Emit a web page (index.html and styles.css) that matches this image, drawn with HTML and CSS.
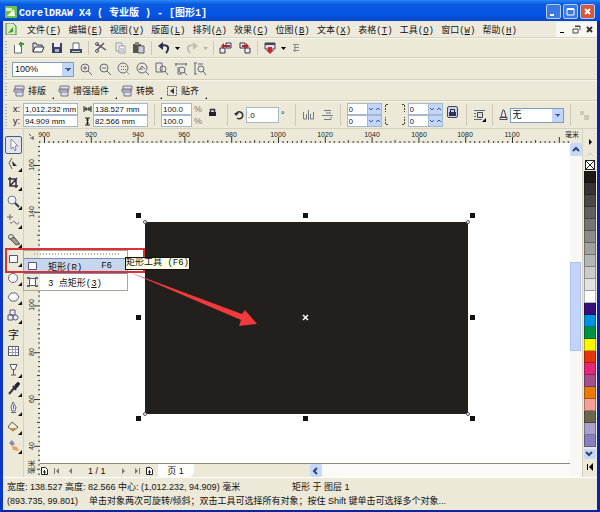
FILE: index.html
```html
<!DOCTYPE html>
<html lang="zh-CN">
<head>
    <meta charset="UTF-8">
    <meta name="viewport" content="width=device-width, initial-scale=1.0">
    <title>CorelDRAW X4</title>
    <link rel="stylesheet" href="styles.css">
</head>
<body>
<div class="window">
    <!-- Title bar -->
    <header class="titlebar">
        <svg class="logo" width="12" height="12" viewBox="0 0 12 12"><rect width="12" height="12" rx="1" fill="#6fc04c"/><path d="M1 2h6v3H1z" fill="#d8f0b8"/><path d="M2 10L9 3l1 7z" fill="#f4fbe8"/></svg>
        <h1>CorelDRAW X4 ( 专业版 ) - [图形1]</h1>
        <button class="win-btn" aria-label="最小化"><svg width="13" height="13"><path d="M3 9h4v2H3z" fill="#fff"/></svg></button>
        <button class="win-btn" aria-label="最大化"><svg width="13" height="13"><path d="M3 4h7v6H3z" fill="none" stroke="#fff"/><path d="M3 3h7v2H3z" fill="#fff"/></svg></button>
        <button class="win-btn close" aria-label="关闭"><svg width="13" height="13"><path d="M4 4l5 5M9 4l-5 5" stroke="#fff" stroke-width="2"/></svg></button>
    </header>

    <!-- Menu bar -->
    <nav class="menubar">
        <svg class="logo" width="12" height="12" viewBox="0 0 12 12"><path d="M1 0h7l3 3v9H1z" fill="#d9edc0" stroke="#56803c"/><path d="M3 10l5-6v5z" fill="#3f9b36"/></svg>
        <div class="menus">
            <button>文件(<u>F</u>)</button>
            <button>编辑(<u>E</u>)</button>
            <button>视图(<u>V</u>)</button>
            <button>版面(<u>L</u>)</button>
            <button>排列(<u>A</u>)</button>
            <button>效果(<u>C</u>)</button>
            <button>位图(<u>B</u>)</button>
            <button>文本(<u>X</u>)</button>
            <button>表格(<u>T</u>)</button>
            <button>工具(<u>O</u>)</button>
            <button>窗口(<u>W</u>)</button>
            <button>帮助(<u>H</u>)</button>
        </div>
        <div class="doc-btns">
            <button aria-label="最小化文档"><svg width="11" height="11"><path d="M2 8h4v1H2z"/></svg></button>
            <button aria-label="还原文档"><svg width="11" height="11"><path d="M4 2h5v4M2 5h5v4H2zM4 2.5h5" fill="none" stroke="#444"/></svg></button>
            <button aria-label="关闭文档"><svg width="11" height="11"><path d="M3 3l5 5M8 3l-5 5" stroke="#333" stroke-width="2"/></svg></button>
        </div>
    </nav>

    <!-- Standard toolbar -->
    <div class="toolbar standard">
        <button aria-label="新建"><svg width="14" height="14"><path d="M2.500 4v8h7V5" fill="#fff" stroke="#667"/><path d="M9 1v5M7 3h5" stroke="#3a9a48" stroke-width="2"/></svg></button>
        <button aria-label="打开"><svg width="14" height="14"><path d="M2 11V2h3l1 2h5v2" fill="#dde" stroke="#334"/><path d="M4 6h9l-2 5H2z" fill="#fff" stroke="#334"/></svg></button>
        <button aria-label="保存"><svg width="14" height="14"><path d="M2 2h10v10H2z" fill="#3b3d6a"/><path d="M4 2h6v4H4z" fill="#eef"/><path d="M5 8h4v3H5z" fill="#aab"/></svg></button>
        <button aria-label="打印"><svg width="14" height="14"><path d="M4 8V2h6v6" fill="#fff" stroke="#667"/><path d="M1 8h12v4H1z" fill="#444860"/><path d="M3 10h8v1H3z" fill="#b8d8b0"/></svg></button>
        <i class="sep"></i>
        <button aria-label="剪切"><svg width="14" height="14" fill="none" stroke="#556"><path d="M3 3l9 6M3 9l7-7" stroke-width="1.500"/><circle cx="3" cy="3" r="1.500"/><circle cx="3" cy="10" r="1.500"/></svg></button>
        <button aria-label="复制"><svg width="14" height="14" stroke="#99a"><path d="M3 2h6v8H3z" fill="#eee"/><path d="M6 5h6v7H6z" fill="#fff"/><path d="M7 8h4M7 10h4"/></svg></button>
        <button aria-label="粘贴"><svg width="14" height="14"><path d="M1 3h8v9H1z" fill="#55564a"/><path d="M3 1h4v3H3z" fill="#888"/><path d="M6 5h6v7H6z" fill="#ccd" stroke="#555"/></svg></button>
        <i class="sep"></i>
        <button aria-label="撤消"><svg width="14" height="14"><path d="M4 5c4-2 8 0 7 3 0 2-1 3-2 4" fill="none" stroke="#2c3050" stroke-width="2"/><path d="M1 5l5-4v8z" fill="#2c3050"/></svg></button>
        <button class="narrow" aria-label="撤消列表"><svg width="5" height="5"><path d="M0 1h5L2.500 4z"/></svg></button>
        <button aria-label="重做"><svg width="14" height="14"><path d="M10 5c-4-2-8 0-7 3 0 2 1 3 2 4" fill="none" stroke="#c2c0b2" stroke-width="2"/><path d="M13 5L8 1v8z" fill="#c2c0b2"/></svg></button>
        <button class="narrow" aria-label="重做列表"><svg width="5" height="5"><path d="M0 1h5L2.500 4z" fill="#b8b5a6"/></svg></button>
        <i class="sep"></i>
        <button aria-label="导入"><svg width="14" height="14"><path d="M1 7h5v5H1zM7 2h5v5H7z" fill="#eef" stroke="#334"/><path d="M11 4H5V2L2 5l3 3V6h6z" fill="#b4202c"/></svg></button>
        <button aria-label="导出"><svg width="14" height="14"><path d="M2 2h5v5H2zM7 7h5v5H7z" fill="#eef" stroke="#334"/><path d="M4 4h4V2l3 3-3 3V6H4z" fill="#b4202c"/></svg></button>
        <i class="sep"></i>
        <button aria-label="应用程序启动器"><svg width="14" height="14"><path d="M2 2h10v6H2z" fill="#dde" stroke="#445"/><path d="M2 2h10v2H2z" fill="#445"/><path d="M5 6h4v3h2l-4 4-4-4h2z" fill="#c02c34"/></svg></button>
        <button class="narrow" aria-label="启动器列表"><svg width="5" height="5"><path d="M0 1h5L2.500 4z"/></svg></button>
        <svg width="9" height="12" fill="none" stroke="#888"><path d="M2 2.500h6M3 5.500h5M2 8.500h6M4 2v8"/></svg>
    </div>

    <!-- Zoom toolbar -->
    <div class="toolbar zoom">
        <select class="combo zoom-level" aria-label="缩放级别"><option>100%</option></select>
        <button aria-label="放大"><svg width="14" height="14" class="lens"><circle cx="6" cy="6" r="4"/><path d="M9 9l4 4M4 6h4M6 4v4"/></svg></button>
        <button aria-label="缩小"><svg width="14" height="14" class="lens"><circle cx="6" cy="6" r="4"/><path d="M9 9l4 4M4 6h4"/></svg></button>
        <button aria-label="缩放选定范围"><svg width="14" height="14" class="lens"><circle cx="6" cy="6" r="5"/><path d="M10 10l3 3M4 4.500h5M4 7.500h5" stroke-dasharray="1 1"/></svg></button>
        <button aria-label="缩放全部对象"><svg width="14" height="14" class="lens"><circle cx="6" cy="6" r="5"/><path d="M10 10l3 3M3 8l3-4 3 3M4 7h3"/></svg></button>
        <button aria-label="缩放页面"><svg width="14" height="14" class="lens"><path d="M1 1h6v9H1z"/><circle cx="8" cy="7" r="3"/><path d="M10 9l3 4"/></svg></button>
        <button aria-label="缩放页宽"><svg width="14" height="14" class="lens"><path d="M1 2h12M2 1v3M12 1v3M4 5v7h4"/><circle cx="8" cy="8" r="3"/><path d="M10 10l3 3"/></svg></button>
        <button aria-label="缩放页高"><svg width="14" height="14" class="lens"><path d="M2 1v11M1 1h3M1 12h3M5 2h5"/><circle cx="8" cy="7" r="3"/><path d="M10 9l3 4"/></svg></button>
    </div>

    <!-- Plug-in toolbar -->
    <div class="toolbar plugins">
        <button><svg width="12" height="12" class="mac"><path d="M2 1h9v4H2zM1 4h9v3H1zM3 7v4h7V6"/></svg>排版</button>
        <button><svg width="12" height="12" class="mac"><path d="M2 1h9v4H2zM1 4h9v3H1zM3 7v4h7V6"/></svg>增强插件</button>
        <button><svg width="12" height="12" class="mac"><path d="M2 1h9v4H2zM1 4h9v3H1zM3 7v4h7V6"/></svg>转换</button>
        <button><svg width="12" height="12"><path d="M1.500 1.500h9v9h-9z" fill="none" stroke="#556" stroke-dasharray="2 1"/><path d="M4 6l4-3v6z" fill="#334"/></svg>贴齐</button>
    </div>

    <!-- Property bar -->
    <div class="toolbar props">
        <div class="pair">
            <label for="posX">x:</label><input id="posX" class="field" value="1,012.232 mm">
            <label for="posY">y:</label><input id="posY" class="field" value="94.909 mm">
        </div>
        <div class="pair size">
            <label for="sizeW" aria-label="宽度"><svg width="9" height="8"><path d="M1 1v6M8 1v6M1 4h7M3 2v4M6 2v4" stroke="#222"/></svg></label><input id="sizeW" class="field" value="138.527 mm">
            <label for="sizeH" aria-label="高度"><svg width="9" height="9"><path d="M2 1h5M2 8h5M4.500 1v7M3 3h3M3 6h3" stroke="#222"/></svg></label><input id="sizeH" class="field" value="82.566 mm">
        </div>
        <i class="sep"></i>
        <div class="pair scale">
            <input id="scaleX" class="field" value="100.0"><label for="scaleX">%</label>
            <input id="scaleY" class="field" value="100.0"><label for="scaleY">%</label>
        </div>
        <button class="lock" aria-label="锁定比率"><svg width="9" height="10"><path d="M2.500 5V2.500h4V5" fill="none" stroke="#334" stroke-width="1.500"/><path d="M1 5h7v4H1z" fill="#223"/></svg></button>
        <i class="sep"></i>
        <div class="rotate">
            <label for="angle" aria-label="旋转角度"><svg width="10" height="10"><path d="M2 4a3.500 3.500 0 1 1 1 4" fill="none" stroke="#333" stroke-width="1.500"/><path d="M0 3h5L2 6z" fill="#333"/></svg></label>
            <input id="angle" class="field" value=".0"><span>°</span>
        </div>
        <i class="sep"></i>
        <button aria-label="水平镜像"><svg width="13" height="12" fill="none" stroke="#778"><path d="M1.500 3v7h3V5M11.500 3v7h-3V5M6.500 1v10"/></svg></button>
        <button aria-label="垂直镜像"><svg width="13" height="12" fill="none" stroke="#778"><path d="M3 1.500h7M5 4h5M1 6.500h11M3 10.500h7V8"/></svg></button>
        <i class="sep"></i>
        <div class="corners">
            <input type="text" class="field spin" aria-label="左上角圆滑度" value="0"><button class="arrows" aria-label="调整左上角"><svg width="13" height="10"><path d="M1 4l2 2 2-2M8 6l2-2 2 2"/></svg></button>
            <input type="text" class="field spin" aria-label="左下角圆滑度" value="0"><button class="arrows" aria-label="调整左下角"><svg width="13" height="10"><path d="M1 4l2 2 2-2M8 6l2-2 2 2"/></svg></button>
        </div>
        <svg width="22" height="24" fill="none" stroke="#443" stroke-dasharray="2 1"><path d="M4 1.500H1.500V9M18 1.500h2.500V9M4 21.500H1.500V14M18 21.500h2.500V14"/></svg>
        <div class="corners">
            <input type="text" class="field spin" aria-label="右上角圆滑度" value="0"><button class="arrows" aria-label="调整右上角"><svg width="13" height="10"><path d="M1 4l2 2 2-2M8 6l2-2 2 2"/></svg></button>
            <input type="text" class="field spin" aria-label="右下角圆滑度" value="0"><button class="arrows" aria-label="调整右下角"><svg width="13" height="10"><path d="M1 4l2 2 2-2M8 6l2-2 2 2"/></svg></button>
        </div>
        <button class="lock pressed" aria-label="全部圆角"><svg width="9" height="10"><path d="M2.500 5V2.500h4V5" fill="none" stroke="#224"/><path d="M1 5h7v4H1z" fill="#335"/></svg></button>
        <i class="sep"></i>
        <button aria-label="段落文本换行"><svg width="13" height="13"><path d="M1 1.500h11M1 4.500h2M1 7.500h2M1 10.500h8" stroke="#667"/><path d="M4.500 3.500h5v5h-5z" fill="#dde" stroke="#445"/><path d="M13 9v4H9z"/></svg></button>
        <i class="sep"></i>
        <div class="outline">
            <label for="outline" aria-label="轮廓宽度"><svg width="9" height="12"><path d="M2 8l1-4 1-3h1l1 3 1 4zM1 8.500h7v2H1z" fill="#eee" stroke="#445"/></svg></label>
            <select id="outline" class="combo"><option>无</option></select>
        </div>
        <i class="sep"></i>
        <svg width="11" height="12"><path d="M1 2h4v4H1zM5 6h5v5H5z" fill="#ccc9bb"/></svg>
    </div>

    <!-- Toolbox, rulers, page and palette -->
    <main class="workspace">
        <aside class="toolbox">
            <button class="active" aria-label="挑选工具"><svg width="13" height="14"><path d="M4 1v10l2-2 2 4 1-1-1-4h3z" fill="#fff" stroke="#889"/></svg></button>
            <button class="more" aria-label="形状工具"><svg width="13" height="14"><path d="M5 1L2 6l3 6" fill="none" stroke="#556"/><path d="M5 4l5 5-4 0z" fill="#223"/></svg></button>
            <button class="more" aria-label="裁剪工具"><svg width="13" height="14" fill="none" stroke="#334"><path d="M3 1v9h8M1 3h8v9M3 10l7-8" stroke-width="1.500"/></svg></button>
            <button class="more" aria-label="缩放工具"><svg width="13" height="14"><circle cx="5" cy="5" r="4" fill="#eef1fa" stroke="#778"/><path d="M8 8l4 4" stroke="#334" stroke-width="2"/></svg></button>
            <button class="more" aria-label="手绘工具"><svg width="13" height="14" fill="none" stroke="#667"><path d="M3 0v6M0 3h6M3 8c2 4 3-3 5 0s2 3 4 0"/></svg></button>
            <button class="more" aria-label="智能填充工具"><svg width="13" height="14"><circle cx="4" cy="4" r="2.500" fill="none" stroke="#556"/><path d="M3 6l4-2 6 7-4 1z" fill="#999a90" stroke="#555"/></svg></button>
            <button class="more" aria-label="矩形工具"><svg width="13" height="14"><path d="M2.500 3.500h8v7h-8z" fill="#fbfbfd" stroke="#557"/></svg></button>
            <button class="more" aria-label="椭圆形工具"><svg width="13" height="14"><circle cx="6" cy="7" r="4.500" fill="#fbfbfd" stroke="#668"/></svg></button>
            <button class="more" aria-label="多边形工具"><svg width="13" height="14"><path d="M4 3h5l3 4-3 4H4L1 7z" fill="#fbfbfd" stroke="#668"/></svg></button>
            <button class="more" aria-label="基本形状"><svg width="13" height="14" fill="#eee" stroke="#557"><path d="M3 1h5v5H3zM1 6h5v5H1z"/><circle cx="8.500" cy="8.500" r="2.500"/></svg></button>
            <button class="text-tool" aria-label="文本工具">字</button>
            <button aria-label="表格工具"><svg width="13" height="14"><path d="M1.500 2.500h10v9h-10zM1 5.500h11M1 8.500h11M5.500 2v9M8.500 2v9" fill="#fff" stroke="#99a"/><path d="M1.500 2.500h10v9h-10z" fill="none" stroke="#557"/></svg></button>
            <button class="more" aria-label="交互式工具"><svg width="13" height="14"><path d="M3 1.500h7L8 6.500H5zM6.500 6v6M4 12h5" fill="#fff" stroke="#556"/></svg></button>
            <button class="more" aria-label="滴管工具"><svg width="13" height="14"><path d="M2 12l6-7" stroke="#334" stroke-width="2"/><path d="M6 4l3 4M8 4l3-3 1 1-3 4" stroke="#223" stroke-width="2"/></svg></button>
            <button class="more" aria-label="轮廓工具"><svg width="13" height="14"><path d="M6 1l3 5-1 4H5L4 6zM6.500 4v4M4 11.500h5" fill="#eef" stroke="#667"/></svg></button>
            <button class="more" aria-label="填充工具"><svg width="13" height="14"><path d="M5 2l6 5-5 4-5-4z" fill="#f5efdc" stroke="#554"/><path d="M2 8h8l-4 3z" fill="#c29245"/></svg></button>
            <button class="more" aria-label="交互式填充"><svg width="13" height="14"><path d="M5 1l3 4-3 2-3-3z" fill="#8c8aa8"/><path d="M5 7l5 1 2 4-6-1z" fill="#e5a35a"/></svg></button>
        </aside>

        <div class="desk">
            <svg class="ruler-h" height="14" width="100%">
                <defs>
                    <pattern id="ticksH" x="20" width="46.800" height="14" patternUnits="userSpaceOnUse">
                        <path d="M0.500 8v6M5 12v2M9.500 12v2M14.500 12v2M19 12v2M23.500 11v3M28.500 12v2M33 12v2M37.500 12v2M42.500 12v2" stroke="#333"/>
                    </pattern>
                </defs>
                <rect x="15" width="531" height="14" fill="url(#ticksH)"/>
                <path d="M5 5l2 2M9 7v4M6 9h4" stroke="#555"/>
                <text x="20" y="8">900</text>
                <text x="67" y="8">920</text>
                <text x="114" y="8">940</text>
                <text x="160" y="8">960</text>
                <text x="207" y="8">980</text>
                <text x="254" y="8">1000</text>
                <text x="301" y="8">1020</text>
                <text x="348" y="8">1040</text>
                <text x="395" y="8">1060</text>
                <text x="441" y="8">1080</text>
                <text x="488" y="8">1100</text>
                <text x="548" y="8">毫米</text>
            </svg>
            <div class="desk-row">
                <svg class="ruler-v" width="16" height="333">
                    <defs>
                        <pattern id="ticksV" y="22" width="16" height="46.800" patternUnits="userSpaceOnUse">
                            <path d="M10 0.500h6M14 5h2M14 9.500h2M14 14.500h2M14 19h2M13 23.500h3M14 28.500h2M14 33h2M14 37.500h2M14 42.500h2" stroke="#333"/>
                        </pattern>
                    </defs>
                    <rect width="16" height="333" fill="url(#ticksV)"/>
                    <text transform="translate(10 22) rotate(-90)">160</text>
                    <text transform="translate(10 69) rotate(-90)">140</text>
                    <text transform="translate(10 162) rotate(-90)">100</text>
                    <text transform="translate(10 209) rotate(-90)">80</text>
                    <text transform="translate(10 256) rotate(-90)">60</text>
                    <text transform="translate(10 303) rotate(-90)">40</text>
                    <text transform="translate(10 324) rotate(-90)">毫米</text>
                </svg>
                <div class="page-col">
                    <svg class="canvas" width="100%" height="320">
                        <rect x="105" y="79" width="323" height="192" fill="#231f1c"/>
                        <g fill="#fff" stroke="#555">
                            <circle cx="105" cy="79" r="1.500"/><circle cx="428" cy="79" r="1.500"/>
                            <circle cx="105" cy="271" r="1.500"/><circle cx="428" cy="271" r="1.500"/>
                        </g>
                        <path d="M96 70h5v5h-5zM263 70h5v5h-5zM430 70h5v5h-5zM96 172h5v5h-5zM430 172h5v5h-5zM96 273h5v5h-5zM263 273h5v5h-5zM430 273h5v5h-5z" fill="#111"/>
                        <path d="M263 172l5 5M268 172l-5 5" stroke="#fff" stroke-width="1.500"/>
                    </svg>
                    <div class="pagebar">
                        <button aria-label="在前面添加页"><svg width="9" height="10"><path d="M1.500 1.500h4l2 2v5h-6zM3 6h3M4.500 4v4" fill="#fff" stroke="#222"/></svg></button>
                        <button aria-label="第一页"><svg width="9" height="8"><path d="M1 1h1v6H1zM6 1v6L3 4z" fill="#777"/></svg></button>
                        <button aria-label="上一页"><svg width="9" height="8"><path d="M6 1v6L3 4z" fill="#777"/></svg></button>
                        <span class="page-count">1 / 1</span>
                        <button aria-label="下一页"><svg width="9" height="8"><path d="M3 1v6l3-3z" fill="#777"/></svg></button>
                        <button aria-label="最后一页"><svg width="9" height="8"><path d="M7 1h1v6H7zM3 1v6l3-3z" fill="#777"/></svg></button>
                        <button aria-label="在后面添加页"><svg width="9" height="10"><path d="M1.500 1.500h4l2 2v5h-6zM3 6h3M4.500 4v4" fill="#fff" stroke="#222"/></svg></button>
                        <button class="page-tab">页 1</button>
                        <div class="hscroll"><button class="scroll-btn" aria-label="向左滚动"><svg width="10" height="10"><path d="M6 2L3 5l3 3" fill="none" stroke="#346" stroke-width="2"/></svg></button></div>
                    </div>
                </div>
                <div class="vscroll">
                    <button class="scroll-btn" aria-label="向上滚动"><svg width="10" height="10"><path d="M2 6l3-3 3 3" fill="none" stroke="#346" stroke-width="2"/></svg></button>
                    <div class="thumb"></div>
                </div>
            </div>
        </div>

        <aside class="palette">
            <button class="flyout" aria-label="调色板菜单"><svg width="8" height="8"><path d="M3 1v6l3-3z"/></svg></button>
            <button class="up" aria-label="向上"><svg width="8" height="6"><path d="M1 5l3-3 3 3" fill="none" stroke="#b5ccc5"/></svg></button>
            <button class="swatch none" aria-label="无填充"><svg width="12" height="12"><path d="M1.500 1.500h9v9h-9zM1 1l10 10M11 1L1 11" fill="#fff" stroke="#222"/></svg></button>
            <button class="swatch c-black" aria-label="黑"></button>
            <button class="swatch c-90" aria-label="90% 黑"></button>
            <button class="swatch c-80" aria-label="80% 黑"></button>
            <button class="swatch c-70" aria-label="70% 黑"></button>
            <button class="swatch c-60" aria-label="60% 黑"></button>
            <button class="swatch c-50" aria-label="50% 黑"></button>
            <button class="swatch c-40" aria-label="40% 黑"></button>
            <button class="swatch c-30" aria-label="30% 黑"></button>
            <button class="swatch c-20" aria-label="20% 黑"></button>
            <button class="swatch c-10" aria-label="10% 黑"></button>
            <button class="swatch c-white" aria-label="白"></button>
            <button class="swatch c-blue" aria-label="蓝"></button>
            <button class="swatch c-cyan" aria-label="青"></button>
            <button class="swatch c-green" aria-label="绿"></button>
            <button class="swatch c-yellow" aria-label="黄"></button>
            <button class="swatch c-red" aria-label="红"></button>
            <button class="swatch c-magenta" aria-label="品红"></button>
            <button class="swatch c-purple" aria-label="紫"></button>
            <button class="swatch c-orange" aria-label="橘红"></button>
            <button class="swatch c-pink" aria-label="粉"></button>
            <button class="swatch c-brown" aria-label="褐"></button>
            <button class="swatch c-lilac" aria-label="淡紫"></button>
            <button class="swatch c-violet" aria-label="紫罗兰"></button>
            <button class="down" aria-label="向下"><svg width="10" height="10"><path d="M2 3l3 3 3-3" fill="none" stroke="#346" stroke-width="2"/></svg></button>
            <button class="expand" aria-label="展开"><svg width="10" height="10"><path d="M2 2h1v6H2zM8 1v8L4 5z"/></svg></button>
        </aside>

        <!-- Rectangle tool flyout -->
        <div class="flyout-menu">
            <button class="selected"><svg width="13" height="12"><path d="M2.500 2.500h8v7h-8z" fill="#fff" stroke="#557"/></svg><span>矩形(<u>R</u>)</span><kbd>F6</kbd></button>
            <button><svg width="13" height="12"><path d="M3.500 2.500h6v7h-6z" fill="#fff" stroke="#557"/><path d="M1 1h3v2H1zM9 1h3v2H9zM1 9h3v2H1zM9 9h3v2H9z" fill="#667"/></svg><span>3 点矩形(<u>3</u>)</span></button>
        </div>
        <div class="mark"></div>
        <div class="tooltip">矩形工具 (F6)</div>
        <svg class="arrow" width="130" height="58"><path d="M0 0l113 42 3-4 12 14-18 2 2-6z" fill="#f03a3c"/></svg>
    </main>

    <footer class="status">
        <div class="status-row"><span class="dims">宽度: 138.527 高度: 82.566 中心: (1,012.232, 94.909) 毫米</span><span>矩形 于 图层 1</span></div>
        <div class="status-row"><span class="coords">(893.735, 99.801)</span><span>单击对象两次可旋转/倾斜；双击工具可选择所有对象；按住 Shift 键单击可选择多个对象...</span></div>
    </footer>
</div>
</body>
</html>
```
FILE: styles.css
```css
* {
    box-sizing: border-box;
}

body {
    margin: 0;
    font-family: "Liberation Sans", "Noto Sans CJK SC", sans-serif;
    font-size: 9px;
    color: #111;
}

button {
    padding: 0;
    border: none;
    background: none;
    font: inherit;
    color: inherit;
}

svg {
    display: block;
    flex: none;
}

.window {
    display: flex;
    flex-direction: column;
    min-height: 100vh;
    border: 3px solid #0c36c8;
    border-top: none;
    border-right-color: #0a24a4;
    border-bottom-color: #0a24a4;
}

/* title bar */
.titlebar {
    display: flex;
    align-items: center;
    gap: 2px;
    height: 21px;
    margin: 0 -3px;
    padding: 2px 5px 0 5px;
    background: linear-gradient(#2a86f5, #0a5be0 20%, #0554e4 70%, #0748c4);
}

.titlebar h1 {
    flex: 1;
    margin: 0;
    font: bold 10px "Liberation Mono", "Noto Sans CJK SC", monospace;
    color: #fff;
}

.win-btn {
    display: flex;
    width: 15px;
    height: 15px;
    border: 1px solid #b8cdf5;
    border-radius: 2px;
    background: #3c78e2;
}

.win-btn.close {
    background: #d8563a;
}

/* menu */
.menubar {
    display: flex;
    align-items: center;
    height: 17px;
    padding-left: 2px;
    background: #edeadd;
    border-bottom: 1px solid #d8d4c2;
}

.menus {
    display: grid;
    grid-template-columns: repeat(12, 1fr);
    width: 497px;
    margin-left: 10px;
    font-family: "Liberation Mono", "Noto Sans CJK SC", monospace;
}

.menus button {
    text-align: left;
    white-space: nowrap;
}

.doc-btns {
    display: flex;
    gap: 2px;
    margin-left: auto;
    padding: 2px;
    background: #f8f7f0;
}

/* toolbars */
.toolbar {
    display: flex;
    align-items: center;
    background: #ece9d8;
    border-bottom: 1px solid #d5d1be;
    border-top: 1px solid #f7f5ea;
}

.toolbar::before {
    content: "";
    align-self: stretch;
    width: 2px;
    margin: 2px 0 2px 2px;
    background: repeating-linear-gradient(#b8b4a0 0 1px, transparent 1px 3px);
}

.sep {
    flex: none;
    align-self: stretch;
    width: 1px;
    margin: 2px 6px;
    background: #cdc9b6;
}

.standard {
    height: 20px;
    gap: 5px;
}

.standard .sep {
    margin: 2px 0;
}

.standard .narrow {
    margin-left: -1px;
}

.zoom {
    height: 22px;
    gap: 5px;
}

.lens {
    fill: none;
    stroke: #667;
}

.combo {
    appearance: none;
    height: 15px;
    border: 1px solid #7f9db9;
    padding: 0 2px;
    border-radius: 0;
    background: linear-gradient(45deg, transparent 50%, #345a9c 50%) right 5px center / 3px 3px no-repeat,
        linear-gradient(-45deg, transparent 50%, #345a9c 50%) right 2px center / 3px 3px no-repeat,
        linear-gradient(#c3d5fb, #c3d5fb) right / 11px 100% no-repeat, #fff;
    font: inherit;
    color: #111;
}

.zoom-level {
    width: 62px;
}

.plugins {
    height: 21px;
    gap: 12px;
}

.plugins::before {
    margin-right: -6px;
}

.plugins button {
    position: relative;
    display: flex;
    align-items: center;
    gap: 3px;
}

.plugins button::after,
.toolbox .more::after {
    content: "";
    position: absolute;
    right: 0;
    bottom: 1px;
    border: 2px solid #111;
    border-top-color: transparent;
    border-left-color: transparent;
}

.plugins button::after {
    right: -8px;
    bottom: -2px;
    border-width: 1px;
}

.mac {
    fill: #dcdcec;
    stroke: #778;
}

.props {
    height: 28px;
}

.props::before {
    margin-right: 6px;
}

.field {
    width: 100%;
    min-width: 0;
    height: 12px;
    padding: 0 0 0 1px;
    border: 1px solid #a5b8cc;
    background: #fff;
    font: 8px "Liberation Sans", sans-serif;
    color: #111;
}

.pair {
    display: grid;
    grid-template-columns: 10px 55px;
    align-items: center;
}

.pair.size {
    margin-left: 5px;
}

.pair.scale {
    grid-template-columns: 31px 10px;
    column-gap: 2px;
    color: #777;
}

.lock {
    margin: 0 4px 6px 4px;
}

.lock.pressed {
    margin-right: 2px;
    border: 1px solid #446;
    border-radius: 2px;
    background: #c8d3ea;
}

.rotate,
.outline {
    display: flex;
    align-items: center;
    gap: 2px;
}

.rotate {
    margin-right: 4px;
}

.rotate .field {
    width: 33px;
    height: 16px;
}

.props > button + button {
    margin-left: 6px;
}

.corners {
    display: grid;
    grid-template-columns: 20px 15px;
}

.field.spin {
    border-right: none;
}

.arrows {
    height: 12px;
    border: 1px solid #a5b8cc;
    background: #c3d5fb;
}

.arrows svg {
    fill: none;
    stroke: #345a9c;
}

.props > svg {
    margin: 0 2px;
}

.outline .combo {
    width: 54px;
}

/* workspace */
.workspace {
    position: relative;
    display: flex;
    flex: 1;
    background: #ece9d8;
}

.toolbox {
    display: flex;
    flex-direction: column;
    width: 21px;
    padding: 7px 2px 0 2px;
    border-right: 1px solid #d5d1be;
}

.toolbox button {
    position: relative;
    display: flex;
    align-items: center;
    justify-content: center;
    width: 17px;
    height: 18px;
    margin-bottom: 1px;
}

.toolbox .active {
    border: 1px solid #4a5d80;
    border-radius: 2px;
    background: #e2e5ee;
}

.toolbox .text-tool {
    height: 15px;
    font-size: 11px;
}

.desk {
    display: flex;
    flex: 1;
    flex-direction: column;
    min-width: 0;
}

.desk-row {
    display: flex;
    flex: 1;
}

.desk text {
    font: 7px "Liberation Sans", "Noto Sans CJK SC", sans-serif;
    text-anchor: middle;
    fill: #222;
}

.page-col {
    display: flex;
    flex: 1;
    flex-direction: column;
    min-width: 0;
    background: #fff;
}

.canvas {
    flex: 1 0 auto;
}

.pagebar {
    display: flex;
    align-items: center;
    gap: 4px;
    height: 14px;
    border-top: 1px solid #8b8980;
    background: #ece9d8;
}

.page-count {
    padding: 0 9px;
}

.page-tab {
    align-self: stretch;
    width: 36px;
    background: #fff;
    border-radius: 0 0 6px 0;
}

.hscroll {
    display: flex;
    flex: 1;
    align-self: stretch;
    margin-left: 112px;
    background: #fbfaf6;
}

.scroll-btn {
    display: flex;
    align-items: center;
    justify-content: center;
    width: 12px;
    height: 13px;
    border-radius: 2px;
    background: #c6d8fb;
}

.vscroll {
    width: 12px;
    background: #f8f7f3;
}

.thumb {
    height: 89px;
    margin: 106px 1px 0 0;
    border: 1px solid #adc2ee;
    background: #c3d4fb;
}

/* palette */
.palette {
    display: flex;
    flex-direction: column;
    align-items: center;
    width: 15px;
    padding-top: 7px;
    border-left: 1px solid #d5d1be;
}

.swatch {
    width: 12px;
    height: 12px;
    border: 1px solid rgba(0, 0, 0, 0.3);
    border-top: none;
}

.palette .none {
    border: none;
}

.flyout {
    height: 12px;
}

.up {
    height: 11px;
}

.down {
    width: 12px;
    margin-top: 2px;
    background: #c6d8fb;
}

.expand {
    margin-top: 3px;
}

.c-black { background: #1f1a17; }
.c-90 { background: #373432; }
.c-80 { background: #4c4845; }
.c-70 { background: #62605e; }
.c-60 { background: #777574; }
.c-50 { background: #8c8b8a; }
.c-40 { background: #a0a09f; }
.c-30 { background: #b5b5b5; }
.c-20 { background: #cbcbcb; }
.c-10 { background: #e2e2e2; }
.c-white { background: #fff; }
.c-blue { background: #35107a; }
.c-cyan { background: #0093dd; }
.c-green { background: #009240; }
.c-yellow { background: #fff500; }
.c-red { background: #e5350d; }
.c-magenta { background: #e5267b; }
.c-purple { background: #a0508c; }
.c-orange { background: #ec7a08; }
.c-pink { background: #f5a097; }
.c-brown { background: #6b6650; }
.c-lilac { background: #aaa0cc; }
.c-violet { background: #8781bd; }

/* flyout and pointer */
.flyout-menu {
    position: absolute;
    top: 121px;
    left: 20px;
    width: 105px;
    padding-top: 7px;
    border: 1px solid #aaa79a;
    background: repeating-linear-gradient(90deg, #b8b4a0 0 1px, transparent 1px 3px) 10px 2px / 86px 2px no-repeat,
        linear-gradient(90deg, #ece9d8 16px, #fff 16px);
    font-family: "Liberation Mono", "Noto Sans CJK SC", monospace;
}

.flyout-menu button {
    display: flex;
    align-items: center;
    width: 100%;
    height: 16px;
    padding-left: 2px;
    white-space: nowrap;
}

.flyout-menu .selected {
    background: #c7d7ee;
    border-top: 1px solid #7a8cae;
    border-bottom: 1px solid #7a8cae;
}

.flyout-menu span {
    margin-left: 9px;
}

.flyout-menu kbd {
    margin: 0 15px 0 auto;
    font: inherit;
}

.tooltip {
    position: absolute;
    top: 128px;
    left: 122px;
    border: 1px solid #111;
    background: #ffffe6;
    font-family: "Liberation Mono", "Noto Sans CJK SC", monospace;
    line-height: 11px;
    white-space: nowrap;
}

.mark {
    position: absolute;
    top: 119px;
    left: 2px;
    width: 140px;
    height: 25px;
    border: 2px solid #d83236;
}

.arrow {
    position: absolute;
    top: 143px;
    left: 126px;
}

/* status bar */
.status {
    padding: 2px 4px 2px 4px;
    background: #ece9d8;
    border-top: 1px solid #fff;
}

.status-row {
    display: flex;
    height: 14px;
    line-height: 14px;
    white-space: nowrap;
}

.dims {
    width: 285px;
}

.coords {
    width: 82px;
}
```
